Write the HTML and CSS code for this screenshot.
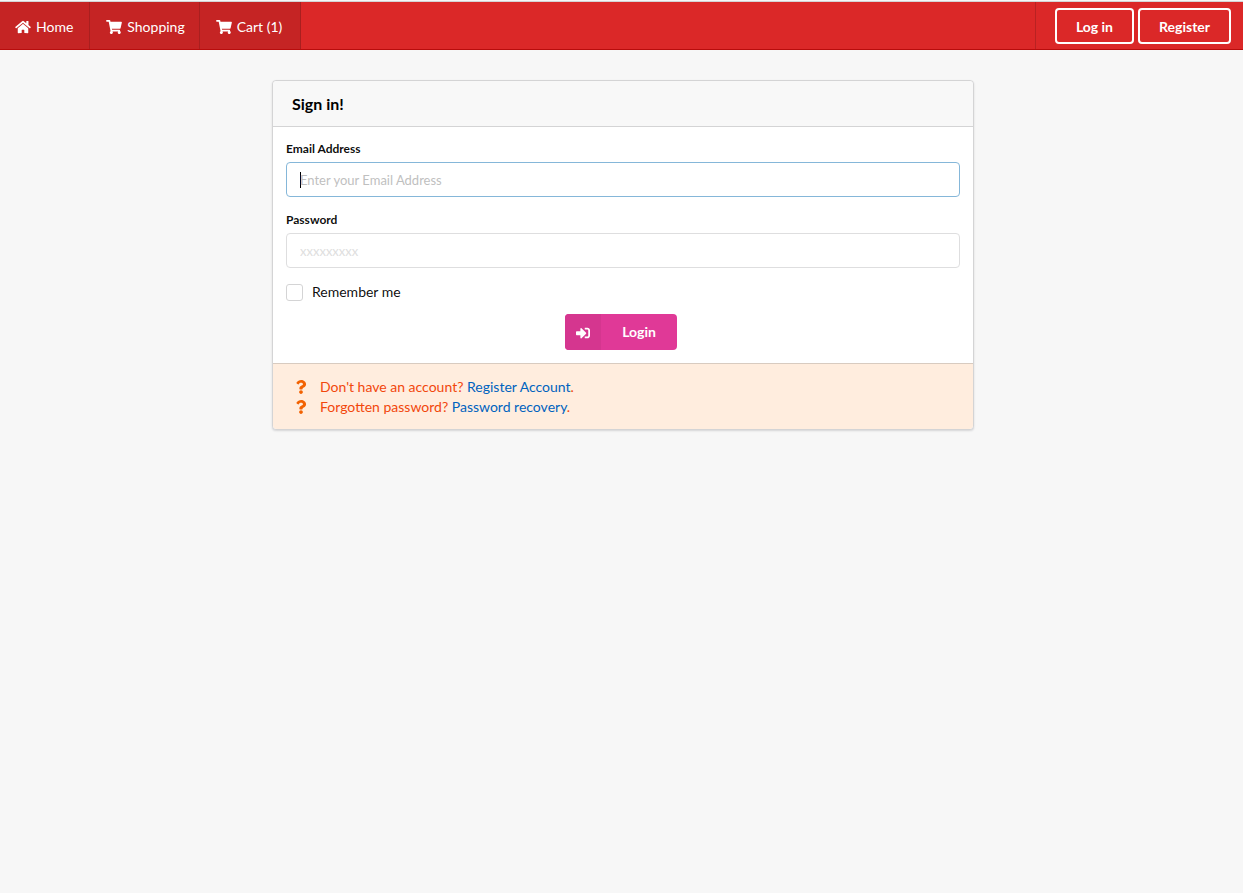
FILE: index.html
```
<!DOCTYPE html>
<html lang="en">
<head>
<meta charset="utf-8">
<meta name="viewport" content="width=device-width, initial-scale=1">
<title>Sign in</title>
<link rel="stylesheet" href="styles.css">
</head>
<body>
<svg class="symbols" aria-hidden="true">
  <symbol id="home" viewBox="0 0 576 512"><path d="M280.37 148.26L96 300.11V464a16 16 0 0 0 16 16l112.06-.29a16 16 0 0 0 15.92-16V368a16 16 0 0 1 16-16h64a16 16 0 0 1 16 16v95.64a16 16 0 0 0 16 16.05L464 480a16 16 0 0 0 16-16V300L295.67 148.26a12.19 12.19 0 0 0-15.3 0zM571.6 251.47L488 182.56V44.05a12 12 0 0 0-12-12h-56a12 12 0 0 0-12 12v72.61L318.47 43a48 48 0 0 0-61 0L4.34 251.47a12 12 0 0 0-1.6 16.9l25.5 31A12 12 0 0 0 45.15 301l235.22-193.74a12.19 12.19 0 0 1 15.3 0L530.9 301a12 12 0 0 0 16.9-1.6l25.5-31a12 12 0 0 0-1.7-16.93z"/></symbol>
  <symbol id="cart" viewBox="0 0 576 512"><path d="M528.12 301.319l47.273-208C578.806 78.301 567.391 64 551.99 64H159.208l-9.166-44.81C147.758 8.021 137.93 0 126.529 0H24C10.745 0 0 10.745 0 24v16c0 13.255 10.745 24 24 24h69.883l70.248 343.435C147.325 417.1 136 435.222 136 456c0 30.928 25.072 56 56 56s56-25.072 56-56c0-15.674-6.447-29.835-16.824-40h209.647C430.447 426.165 424 440.326 424 456c0 30.928 25.072 56 56 56s56-25.072 56-56c0-22.172-12.888-41.332-31.579-50.405l5.517-24.276c3.413-15.018-8.002-29.319-23.403-29.319H218.117l-6.545-32h293.145c11.206 0 20.92-7.754 23.403-18.681z"/></symbol>
  <symbol id="sign-in" viewBox="0 0 512 512"><path d="M416 448h-84c-6.6 0-12-5.4-12-12v-40c0-6.600 5.400-12 12-12h84c17.700 0 32-14.300 32-32V160c0-17.700-14.300-32-32-32h-84c-6.600 0-12-5.400-12-12V76c0-6.600 5.400-12 12-12h84c53 0 96 43 96 96v192c0 53-43 96-96 96zm-47-201L201 79c-15-15-41-4.500-41 17v96H24c-13.300 0-24 10.700-24 24v96c0 13.300 10.700 24 24 24h136v96c0 21.500 26 32 41 17l168-168c9.300-9.400 9.300-24.600 0-34z"/></symbol>
  <symbol id="question" viewBox="0 0 384 512"><path d="M202.021 0C122.202 0 70.503 32.703 29.914 91.026c-7.363 10.58-5.093 25.086 5.178 32.874l43.138 32.709c10.373 7.865 25.132 6.026 33.253-4.148 25.049-31.381 43.630-49.449 82.757-49.449 30.764 0 68.816 19.799 68.816 49.631 0 22.552-18.617 34.134-48.993 51.164-35.423 19.860-82.299 44.576-82.299 106.405V320c0 13.255 10.745 24 24 24h72.471c13.255 0 24-10.745 24-24v-5.773c0-42.860 125.268-44.645 125.268-160.627C377.504 66.256 286.902 0 202.021 0zM192 373.459c-38.196 0-69.271 31.075-69.271 69.271 0 38.195 31.075 69.270 69.271 69.270s69.271-31.075 69.271-69.271-31.075-69.270-69.271-69.270z"/></symbol>
</svg>
<nav class="navbar">
  <a class="nav-item" href="#home"><svg class="icon"><use href="#home"/></svg>Home</a>
  <a class="nav-item" href="#shopping"><svg class="icon"><use href="#cart"/></svg>Shopping</a>
  <a class="nav-item" href="#cart-page"><svg class="icon"><use href="#cart"/></svg>Cart (1)</a>
  <div class="nav-actions">
    <a class="outline-button" href="#login">Log in</a>
    <a class="outline-button" href="#register">Register</a>
  </div>
</nav>
<main class="page">
  <section class="card">
    <header class="card-header"><h1 class="card-title">Sign in!</h1></header>
    <form class="form">
      <div class="field">
        <label class="label" for="email">Email Address</label>
        <input class="input input-active" id="email" type="email" placeholder="Enter your Email Address">
      </div>
      <div class="field">
        <label class="label" for="password">Password</label>
        <input class="input input-password" id="password" type="password" placeholder="xxxxxxxxx">
      </div>
      <div class="remember">
        <input class="checkbox" id="remember" type="checkbox">
        <label for="remember">Remember me</label>
      </div>
      <div class="actions">
        <button class="login-button" type="submit">
          <span class="login-icon"><svg class="icon"><use href="#sign-in"/></svg></span>
          <span class="login-text">Login</span>
        </button>
      </div>
    </form>
    <footer class="message">
      <p class="hint"><svg class="icon hint-icon"><use href="#question"/></svg><span>Don't have an account? <a class="link" href="#register">Register Account</a>.</span></p>
      <p class="hint"><svg class="icon hint-icon"><use href="#question"/></svg><span>Forgotten password? <a class="link" href="#recovery">Password recovery</a>.</span></p>
    </footer>
  </section>
</main>
</body>
</html>
```
FILE: styles.css
```
* { box-sizing: border-box; }

body {
  margin: 0;
  padding-top: 1px;
  background: #f7f7f7;
  color: rgba(0, 0, 0, 0.95);
  font: 14px/20px Lato, "Liberation Sans", sans-serif;
}

.symbols { display: none; }

.icon {
  width: 16px;
  height: 14px;
  fill: currentColor;
  flex: none;
}

.navbar {
  display: flex;
  min-height: 49px;
  background: #db2828;
  border-top: 1px solid #d4d4d5;
  border-bottom: 1px solid #b80c0c;
}

.nav-item {
  display: flex;
  align-items: center;
  gap: 5px;
  padding: 2px 14px 0 16px;
  background: #c52424;
  border-right: 1px solid #a91f1f;
  color: #fff;
  text-decoration: none;
}

.nav-item:first-child { padding: 2px 16px 0 15px; }
.nav-item:last-of-type { padding-right: 18px; }

.nav-actions {
  display: flex;
  align-items: center;
  gap: 4px;
  margin-left: auto;
  padding: 1px 12px 0 19px;
  border-left: 1px solid #b92222;
}

.outline-button {
  padding: 7px 19px 5px;
  border: 2px solid #fff;
  border-radius: 4px;
  color: #fff;
  font-weight: 700;
  text-decoration: none;
}

.page { padding: 30px 19px 30px 22px; }

.card {
  max-width: 702px;
  margin: 0 auto;
  border: 1px solid #d4d4d5;
  border-radius: 4px;
  background: #fff;
  box-shadow: 0 1px 2px rgba(34, 36, 38, 0.15);
}

.card-header {
  padding: 13px 19px 12px;
  border-bottom: 1px solid #d4d4d5;
  border-radius: 4px 4px 0 0;
  background: #f8f8f8;
}

.card-title {
  margin: 0;
  color: #000;
  font-size: 16px;
  line-height: 20px;
}

.form { padding: 13px; }

.field { margin-bottom: 14px; }

.label {
  display: block;
  margin-bottom: 4px;
  font-size: 12px;
  font-weight: 700;
  line-height: 18px;
}

.input {
  display: block;
  width: 100%;
  height: 35px;
  padding: 8px 13px;
  border: 1px solid #dededf;
  border-radius: 4px;
  background: #fff;
  color: inherit;
  font: inherit;
  font-size: 13px;
}

.input::placeholder { color: #bfbfbf; }
.input-password::placeholder { color: #dedede; }

/* The active field shows its insertion bar at the start of the text. */
.input-active {
  border-color: #85b7d9;
  background: #fff linear-gradient(#000, #000) 13px 9px / 1px 16px no-repeat;
}

.remember {
  display: flex;
  align-items: center;
  gap: 9px;
  margin-bottom: 12px;
}

.checkbox {
  appearance: none;
  width: 17px;
  height: 17px;
  margin: 0;
  border: 1px solid #d4d4d5;
  border-radius: 3px;
  background: #fff;
}

.actions {
  display: flex;
  justify-content: center;
  padding-right: 4px;
}

.login-button {
  display: flex;
  padding: 0;
  border: 0;
  border-radius: 4px;
  overflow: hidden;
  background: #e03997;
  color: #fff;
  font: inherit;
  font-weight: 700;
}

.login-icon {
  display: flex;
  align-items: center;
  padding: 2px 10px 0;
  background: #d5368f;
}

.login-text { padding: 8px 21px; }

.message {
  padding: 13px 20px 12px;
  border-top: 1px solid #d8cbc0;
  border-radius: 0 0 4px 4px;
  background: #ffedde;
  color: #f2470c;
}

.hint {
  display: flex;
  align-items: center;
  gap: 11px;
  margin: 0;
}

.hint-icon { color: #f26202; }

.link {
  color: #0063be;
  text-decoration: none;
}
```
